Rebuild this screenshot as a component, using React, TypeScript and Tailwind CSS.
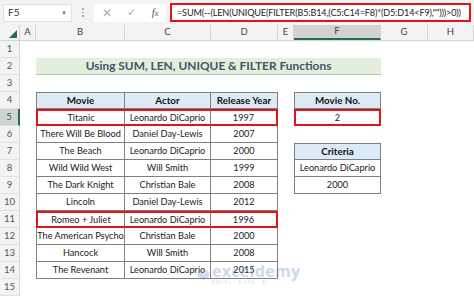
import React from 'react';

type Movie = { title: string; actor: string; year: string };

const movies: Movie[] = [
  { title: 'Titanic', actor: 'Leonardo DiCaprio', year: '1997' },
  { title: 'There Will Be Blood', actor: 'Daniel Day-Lewis', year: '2007' },
  { title: 'The Beach', actor: 'Leonardo DiCaprio', year: '2000' },
  { title: 'Wild Wild West', actor: 'Will Smith', year: '1999' },
  { title: 'The Dark Knight', actor: 'Christian Bale', year: '2008' },
  { title: 'Lincoln', actor: 'Daniel Day-Lewis', year: '2012' },
  { title: 'Romeo + Juliet', actor: 'Leonardo DiCaprio', year: '1996' },
  { title: 'The American Psycho', actor: 'Christian Bale', year: '2000' },
  { title: 'Hancock', actor: 'Will Smith', year: '2008' },
  { title: 'The Revenant', actor: 'Leonardo DiCaprio', year: '2015' },
];

const columns = [
  { key: 'A', w: 'w-[16px]' },
  { key: 'B', w: 'w-[89px]' },
  { key: 'C', w: 'w-[86px]' },
  { key: 'D', w: 'w-[67px]' },
  { key: 'E', w: 'w-[16px]' },
  { key: 'F', w: 'w-[87px]' },
  { key: 'G', w: 'w-[47px]' },
  { key: 'H', w: 'w-[46px]' },
];

const formula = '=SUM(--(LEN(UNIQUE(FILTER(B5:B14,(C5:C14=F8)*(D5:D14<F9),"")))>0))';

function RowHeader({ n, active }: { n: number; active?: boolean }) {
  return (
    <div
      className={
        'w-[20px] shrink-0 flex items-center justify-center text-[9.5px] border-b border-[#e1e1e1] ' +
        (active
          ? 'bg-[#d2d2d2] text-[#217346] border-r-2 border-r-[#217346]'
          : 'bg-[#f3f3f3] text-[#555] border-r border-r-[#d4d4d4]')
      }
    >
      {n}
    </div>
  );
}

function Cell({
  w,
  children,
  className = '',
}: {
  w: string;
  children?: React.ReactNode;
  className?: string;
}) {
  return (
    <div
      className={`${w} shrink-0 h-full min-w-0 flex items-center justify-center whitespace-nowrap ${className}`}
    >
      {children}
    </div>
  );
}

function DataCells({ m, highlighted, header }: { m: Movie; highlighted?: boolean; header?: boolean }) {
  const base = header ? 'font-bold text-[9.8px] text-[#111] bg-[#ddebf7]' : '';
  if (highlighted) {
    return (
      <div className="w-[242px] shrink-0 h-full flex border-2 border-[#e3131b]">
        <Cell w="w-[87px]" className="border-r border-[#7f7f7f]">{m.title}</Cell>
        <Cell w="w-[86px]" className="border-r border-[#7f7f7f]">{m.actor}</Cell>
        <Cell w="w-[65px]">{m.year}</Cell>
      </div>
    );
  }
  return (
    <div className={'w-[242px] shrink-0 h-full flex border-l border-b border-[#7f7f7f] ' + (header ? 'border-t' : '')}>
      <Cell w="w-[88px]" className={`${base} border-r border-[#7f7f7f]`}>{m.title}</Cell>
      <Cell w="w-[86px]" className={`${base} border-r border-[#7f7f7f]`}>{m.actor}</Cell>
      <Cell w="w-[67px]" className={`${base} border-r border-[#7f7f7f]`}>{m.year}</Cell>
    </div>
  );
}

function Row({ n, active, children }: { n: number; active?: boolean; children?: React.ReactNode }) {
  return (
    <div className="h-[17px] flex">
      <RowHeader n={n} active={active} />
      <div className="flex-1 flex h-full">{children}</div>
    </div>
  );
}

function FCell({ kind, text }: { kind: 'head' | 'red' | 'plain' | 'none'; text?: string }) {
  if (kind === 'none') return <Cell w="w-[87px]" />;
  if (kind === 'red')
    return <Cell w="w-[87px]" className="border-2 border-[#e3131b]">{text}</Cell>;
  if (kind === 'head')
    return (
      <Cell w="w-[87px]" className="border border-[#7f7f7f] bg-[#ddebf7] font-bold text-[9.8px] text-[#111]">
        {text}
      </Cell>
    );
  return (
    <Cell w="w-[87px]" className="border-x border-b border-[#7f7f7f]">
      {text}
    </Cell>
  );
}

export default function App() {
  const fCol: Record<number, { kind: 'head' | 'red' | 'plain' | 'none'; text?: string }> = {
    4: { kind: 'head', text: 'Movie No.' },
    5: { kind: 'red', text: '2' },
    7: { kind: 'head', text: 'Criteria' },
    8: { kind: 'plain', text: 'Leonardo DiCaprio' },
    9: { kind: 'plain', text: '2000' },
  };

  return (
    <div
      className="w-[474px] h-[296px] overflow-hidden bg-white relative text-[9.2px] text-[#222]"
      style={{ fontFamily: 'Lato, "Open Sans", sans-serif' }}
    >
      {/* Formula bar */}
      <div className="h-[25px] bg-[#f3f3f3] flex items-center gap-[4px] px-[3px]">
        <div className="w-[69px] h-[18px] bg-white border border-[#e0e0e0] flex items-center justify-between px-[4px] text-[10px] text-[#333]">
          <span>F5</span>
          <span className="text-[6px] text-[#777]">▼</span>
        </div>
        <div className="w-[14px] flex flex-col items-center gap-[2px]">
          <span className="w-[1.5px] h-[1.5px] bg-[#aaa]" />
          <span className="w-[1.5px] h-[1.5px] bg-[#aaa]" />
          <span className="w-[1.5px] h-[1.5px] bg-[#aaa]" />
        </div>
        <div className="w-[72px] h-[18px] bg-white flex items-center justify-around text-[#aaa]">
          <span className="text-[12px]">✕</span>
          <span className="text-[11px]">✓</span>
          <span className="text-[11px] italic text-[#555]" style={{ fontFamily: '"Liberation Serif", serif' }}>
            f<span className="text-[8px]">x</span>
          </span>
        </div>
        <div className="flex-1 h-[19px] bg-white border-2 border-[#e3131b] flex items-center px-[5px] text-[9.1px] tracking-[-0.15px] whitespace-nowrap overflow-hidden">
          {formula}
        </div>
      </div>

      {/* Column headers */}
      <div className="h-[16px] flex bg-[#f3f3f3] border-b border-[#d4d4d4] text-[9.5px] text-[#444]">
        <div className="w-[20px] shrink-0 relative border-r border-[#d4d4d4]">
          <div className="absolute right-[2px] bottom-[2px] w-0 h-0 border-l-[8px] border-l-transparent border-b-[8px] border-b-[#217346]" />
        </div>
        {columns.map(c => (
          <div
            key={c.key}
            className={
              `${c.w} shrink-0 flex items-center justify-center border-r border-[#d4d4d4] ` +
              (c.key === 'F' ? 'bg-[#d2d2d2] border-b-2 border-b-[#217346]' : '')
            }
          >
            {c.key}
          </div>
        ))}
      </div>

      {/* Sheet rows */}
      <Row n={1} />
      <Row n={2}>
        <Cell w="w-[16px]" />
        <div className="w-[345px] shrink-0 h-full flex items-center justify-center bg-[#e2efda] border-b border-[#a9c7c0] font-bold text-[11.9px] text-[#44546a]">
          Using SUM, LEN, UNIQUE &amp; FILTER Functions
        </div>
      </Row>
      <Row n={3} />
      {[4, 5, 6, 7, 8, 9, 10, 11, 12, 13, 14].map(n => {
        const m = n === 4 ? { title: 'Movie', actor: 'Actor', year: 'Release Year' } : movies[n - 5];
        const f = fCol[n] ?? { kind: 'none' as const };
        return (
          <Row key={n} n={n} active={n === 5}>
            <Cell w="w-[16px]" />
            <DataCells m={m} header={n === 4} highlighted={n === 5 || n === 11} />
            <Cell w="w-[16px]" />
            <FCell kind={f.kind} text={f.text} />
          </Row>
        );
      })}
      <Row n={15} />

      {/* Watermark */}
      <div className="absolute left-[197px] top-[263px] flex items-center gap-[2px] opacity-30 pointer-events-none">
        <svg width="13" height="13" viewBox="0 0 14 14">
          <path d="M7 1 L13 4.5 L13 9.5 L7 13 L1 9.5 L1 4.5 Z" fill="#6f8fc6" />
          <path d="M4 5 L7 3.5 L10 5 L7 6.5 Z" fill="#fff" opacity="0.6" />
        </svg>
        <div className="flex flex-col leading-none">
          <span className="text-[16px] text-[#5b7fc0] font-bold tracking-[0.3px]" style={{ fontFamily: '"Open Sans", sans-serif' }}>
            exceldemy
          </span>
          <span className="text-[5px] text-[#7a8aa5] tracking-[1px] mt-[1px]">EXCEL · DATA · BI</span>
        </div>
      </div>
    </div>
  );
}
